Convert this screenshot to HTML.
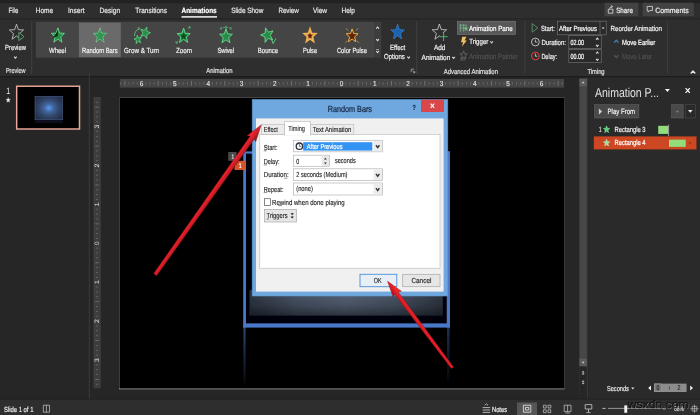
<!DOCTYPE html>
<html><head><meta charset="utf-8"><title>Animations</title>
<style>
html,body{margin:0;padding:0;background:#262626;overflow:hidden}
svg{display:block;font-family:"Liberation Sans",sans-serif}
text{white-space:pre}
</style></head><body>
<svg width="700" height="415" viewBox="0 0 700 415" text-rendering="geometricPrecision">
<filter id="soft" x="0" y="0" width="700" height="415" filterUnits="userSpaceOnUse"><feGaussianBlur stdDeviation="0.38"/></filter>
<g filter="url(#soft)">
<defs>
<radialGradient id="thumbg" cx="50%" cy="50%" r="60%"><stop offset="0" stop-color="#5e9af2"/><stop offset="0.28" stop-color="#4166a2"/><stop offset="0.6" stop-color="#32466a"/><stop offset="1" stop-color="#242f46"/></radialGradient>
<linearGradient id="boxg" x1="0" x2="1" y1="0" y2="0"><stop offset="0" stop-color="#2c3440"/><stop offset="0.25" stop-color="#475264"/><stop offset="0.5" stop-color="#535f72"/><stop offset="0.75" stop-color="#475264"/><stop offset="1" stop-color="#2c3440"/></linearGradient>
<linearGradient id="boxv" x1="0" x2="0" y1="0" y2="1"><stop offset="0" stop-color="#000" stop-opacity="0"/><stop offset="0.5" stop-color="#000" stop-opacity="0.15"/><stop offset="1" stop-color="#000" stop-opacity="0.45"/></linearGradient>
<linearGradient id="refl" x1="0" x2="0" y1="0" y2="1"><stop offset="0" stop-color="#4f7fd0" stop-opacity="0.55"/><stop offset="1" stop-color="#4f7fd0" stop-opacity="0.02"/></linearGradient>
<linearGradient id="refl2" x1="0" x2="0" y1="0" y2="1"><stop offset="0" stop-color="#4f7fd0" stop-opacity="0.38"/><stop offset="1" stop-color="#4f7fd0" stop-opacity="0"/></linearGradient>
<linearGradient id="arrA" x1="0" x2="0" y1="0" y2="1"><stop offset="0.2" stop-color="#ee2830"/><stop offset="0.55" stop-color="#d81c24"/><stop offset="0.8" stop-color="#8a2028"/></linearGradient>
<linearGradient id="arrB" x1="0" x2="0" y1="0" y2="1"><stop offset="0.25" stop-color="#b01820"/><stop offset="0.45" stop-color="#e01c24"/><stop offset="0.75" stop-color="#f02830"/></linearGradient>
</defs>
<rect x="0.00" y="0.00" width="700.00" height="415.00" fill="#262626" />
<rect x="0.00" y="0.00" width="700.00" height="19.00" fill="#2f2f2f" />
<rect x="0.00" y="0.00" width="700.00" height="3.20" fill="#242424" />
<rect x="0.00" y="18.50" width="700.00" height="57.60" fill="#2f2f2f" />
<rect x="0.00" y="18.00" width="700.00" height="1.50" fill="#282828" />
<rect x="0.00" y="76.10" width="700.00" height="1.60" fill="#1f1f1f" />
<text x="8.60" y="12.90" font-size="7.6" fill="#e6e6e6" font-weight="normal" textLength="9.70" lengthAdjust="spacingAndGlyphs" stroke="#e6e6e6" stroke-width="0.2" >File</text>
<text x="35.70" y="12.90" font-size="7.6" fill="#e6e6e6" font-weight="normal" textLength="17.40" lengthAdjust="spacingAndGlyphs" stroke="#e6e6e6" stroke-width="0.2" >Home</text>
<text x="68.00" y="12.90" font-size="7.6" fill="#e6e6e6" font-weight="normal" textLength="16.50" lengthAdjust="spacingAndGlyphs" stroke="#e6e6e6" stroke-width="0.2" >Insert</text>
<text x="99.60" y="12.90" font-size="7.6" fill="#e6e6e6" font-weight="normal" textLength="20.60" lengthAdjust="spacingAndGlyphs" stroke="#e6e6e6" stroke-width="0.2" >Design</text>
<text x="135.30" y="12.90" font-size="7.6" fill="#e6e6e6" font-weight="normal" textLength="31.70" lengthAdjust="spacingAndGlyphs" stroke="#e6e6e6" stroke-width="0.2" >Transitions</text>
<text x="231.20" y="12.90" font-size="7.6" fill="#e6e6e6" font-weight="normal" textLength="32.10" lengthAdjust="spacingAndGlyphs" stroke="#e6e6e6" stroke-width="0.2" >Slide Show</text>
<text x="278.40" y="12.90" font-size="7.6" fill="#e6e6e6" font-weight="normal" textLength="20.40" lengthAdjust="spacingAndGlyphs" stroke="#e6e6e6" stroke-width="0.2" >Review</text>
<text x="313.00" y="12.90" font-size="7.6" fill="#e6e6e6" font-weight="normal" textLength="14.00" lengthAdjust="spacingAndGlyphs" stroke="#e6e6e6" stroke-width="0.2" >View</text>
<text x="341.60" y="12.90" font-size="7.6" fill="#e6e6e6" font-weight="normal" textLength="13.40" lengthAdjust="spacingAndGlyphs" stroke="#e6e6e6" stroke-width="0.2" >Help</text>
<text x="181.50" y="12.90" font-size="7.6" fill="#ffffff" font-weight="bold" textLength="35.20" lengthAdjust="spacingAndGlyphs" stroke="#ffffff" stroke-width="0.2" >Animations</text>
<rect x="181.50" y="16.20" width="35.50" height="1.40" fill="#ffffff" />
<rect x="604.50" y="2.80" width="33.90" height="13.40" fill="#424242" rx="1"/>
<rect x="642.60" y="2.80" width="51.10" height="13.40" fill="#424242" rx="1"/>
<text x="616.20" y="12.60" font-size="7.6" fill="#f0f0f0" font-weight="normal" textLength="16.70" lengthAdjust="spacingAndGlyphs" stroke="#f0f0f0" stroke-width="0.2" >Share</text>
<text x="655.20" y="12.60" font-size="7.6" fill="#f0f0f0" font-weight="normal" textLength="33.50" lengthAdjust="spacingAndGlyphs" stroke="#f0f0f0" stroke-width="0.2" >Comments</text>
<path d="M608.3,9.2 h4.6 v4 h-4.6 z" fill="none" stroke="#e0e0e0" stroke-width="0.8" />
<path d="M609.6,8.6 q0.6,-2 2.6,-2 M611.2,5.4 l1.4,1.2 l-1.4,1.2" fill="none" stroke="#e0e0e0" stroke-width="0.8" />
<path d="M647.2,6.4 h5.2 v4.2 h-2.8 l-1.4,1.5 v-1.5 h-1 z" fill="none" stroke="#e0e0e0" stroke-width="0.8" />
<line x1="31.60" y1="21.00" x2="31.60" y2="74.00" stroke="#424242" stroke-width="0.8" />
<line x1="416.70" y1="21.00" x2="416.70" y2="74.00" stroke="#424242" stroke-width="0.8" />
<line x1="525.00" y1="21.00" x2="525.00" y2="74.00" stroke="#424242" stroke-width="0.8" />
<line x1="667.40" y1="21.00" x2="667.40" y2="74.00" stroke="#424242" stroke-width="0.8" />
<polygon points="16.50,24.20 18.35,29.67 23.60,29.94 19.50,33.58 20.89,39.21 16.50,36.00 12.11,39.21 13.50,33.58 9.40,29.94 14.65,29.67" fill="none" stroke="#cfcfcf" stroke-width="0.8" stroke-linejoin="miter" />
<path d="M18.8,32.6 l5.2,4 l-5.2,4 z" fill="#2f2f2f" stroke="#5aa872" stroke-width="0.9" />
<text x="5.10" y="50.30" font-size="7.4" fill="#f0f0f0" font-weight="normal" textLength="20.80" lengthAdjust="spacingAndGlyphs" stroke="#f0f0f0" stroke-width="0.2" >Preview</text>
<path d="M14.10,56.55 L15.40,58.05 L16.70,56.55" fill="none" stroke="#d0d0d0" stroke-width="1.1199999999999999" />
<text x="5.90" y="73.40" font-size="7.2" fill="#e0e0e0" font-weight="normal" textLength="19.60" lengthAdjust="spacingAndGlyphs" stroke="#e0e0e0" stroke-width="0.2" >Preview</text>
<rect x="35.80" y="21.90" width="338.20" height="35.80" fill="#444444" />
<rect x="374.00" y="21.90" width="7.20" height="35.80" fill="#3c3c3c" />
<rect x="78.90" y="22.60" width="41.90" height="34.60" fill="#6a6a6a" />
<text x="49.00" y="52.60" font-size="7.4" fill="#f2f2f2" font-weight="normal" textLength="17.00" lengthAdjust="spacingAndGlyphs" stroke="#f2f2f2" stroke-width="0.2" >Wheel</text>
<text x="82.00" y="52.60" font-size="7.4" fill="#f2f2f2" font-weight="normal" textLength="35.70" lengthAdjust="spacingAndGlyphs" stroke="#f2f2f2" stroke-width="0.2" >Random Bars</text>
<text x="124.00" y="52.60" font-size="7.4" fill="#f2f2f2" font-weight="normal" textLength="35.10" lengthAdjust="spacingAndGlyphs" stroke="#f2f2f2" stroke-width="0.2" >Grow &amp; Turn</text>
<text x="175.90" y="52.60" font-size="7.4" fill="#f2f2f2" font-weight="normal" textLength="16.20" lengthAdjust="spacingAndGlyphs" stroke="#f2f2f2" stroke-width="0.2" >Zoom</text>
<text x="217.40" y="52.60" font-size="7.4" fill="#f2f2f2" font-weight="normal" textLength="16.70" lengthAdjust="spacingAndGlyphs" stroke="#f2f2f2" stroke-width="0.2" >Swivel</text>
<text x="257.80" y="52.60" font-size="7.4" fill="#f2f2f2" font-weight="normal" textLength="20.40" lengthAdjust="spacingAndGlyphs" stroke="#f2f2f2" stroke-width="0.2" >Bounce</text>
<text x="302.90" y="52.60" font-size="7.4" fill="#f2f2f2" font-weight="normal" textLength="14.20" lengthAdjust="spacingAndGlyphs" stroke="#f2f2f2" stroke-width="0.2" >Pulse</text>
<text x="336.90" y="52.60" font-size="7.4" fill="#f2f2f2" font-weight="normal" textLength="30.10" lengthAdjust="spacingAndGlyphs" stroke="#f2f2f2" stroke-width="0.2" >Color Pulse</text>
<polygon points="57.90,27.90 59.62,33.12 64.51,33.36 60.68,36.83 61.99,42.19 57.90,39.12 53.81,42.19 55.12,36.83 51.29,33.36 56.18,33.12" fill="#268c46" stroke="#63d287" stroke-width="1.0" stroke-linejoin="miter" />
<path d="M57.9,29.4 L57.9,36 L53,38 L55.9,34 Z" fill="#0a3016" stroke="none" stroke-width="1" />
<polygon points="100.00,27.90 101.72,33.12 106.61,33.36 102.78,36.83 104.09,42.19 100.00,39.12 95.91,42.19 97.22,36.83 93.39,33.36 98.28,33.12" fill="#2f9650" stroke="#86dca0" stroke-width="0.9" stroke-linejoin="miter" stroke-dasharray="1.2 0.8"/>
<polygon points="146.76,27.00 146.92,31.29 150.47,32.80 146.92,34.31 146.76,38.60 144.40,35.24 140.76,36.39 142.85,32.80 140.76,29.21 144.40,30.36" fill="#268c46" stroke="#63d287" stroke-width="0.8" stroke-linejoin="miter" />
<polygon points="137.21,35.17 138.63,37.90 141.40,37.49 139.55,39.86 140.75,42.73 138.19,41.46 136.16,43.64 136.43,40.49 133.98,38.97 136.70,38.29" fill="#268c46" stroke="#63d287" stroke-width="0.8" stroke-linejoin="miter" />
<path d="M134.4,36.2 q0.2,-5.6 4.8,-7.6" fill="none" stroke="#63d287" stroke-width="0.8" />
<path d="M137.6,27.4 l2.2,1 l-1.4,1.8" fill="none" stroke="#63d287" stroke-width="0.7" />
<polygon points="183.60,28.10 185.32,33.32 190.21,33.56 186.38,37.03 187.69,42.39 183.60,39.32 179.51,42.39 180.82,37.03 176.99,33.56 181.88,33.32" fill="#268c46" stroke="#63d287" stroke-width="1.0" stroke-linejoin="miter" />
<polygon points="183.60,33.00 184.38,35.19 186.45,35.35 184.86,36.86 185.36,39.15 183.60,37.90 181.84,39.15 182.34,36.86 180.75,35.35 182.82,35.19" fill="#0b4a1e" stroke="#0b4a1e" stroke-width="0.5" stroke-linejoin="miter" />
<path d="M188.2,28.8 l1.8,-1.8 M188.4,26.8 h1.7 v1.7 M178,41.2 l-1.8,1.8 M176,41.2 v1.9 h1.9" fill="none" stroke="#63d287" stroke-width="0.7" />
<polygon points="226.00,28.90 227.67,33.98 232.44,34.22 228.71,37.60 229.98,42.83 226.00,39.83 222.02,42.83 223.29,37.60 219.56,34.22 224.33,33.98" fill="#268c46" stroke="#63d287" stroke-width="1.0" stroke-linejoin="miter" />
<path d="M220.6,28.6 q5.4,-2.6 10.8,0" fill="none" stroke="#63d287" stroke-width="0.7" stroke-dasharray="1.8 1"/>
<path d="M221.6,27 l-1.4,1.6 l1.8,0.8 M230.4,27 l1.4,1.6 l-1.8,0.8" fill="none" stroke="#63d287" stroke-width="0.6" />
<path d="M226,25.6 v3.4" fill="none" stroke="#63d287" stroke-width="0.7" />
<polygon points="265.53,27.80 268.37,32.16 273.02,30.89 270.24,35.31 272.74,39.94 268.18,38.31 265.08,42.44 265.04,37.01 260.63,34.93 265.16,33.21" fill="#268c46" stroke="#63d287" stroke-width="1.0" stroke-linejoin="miter" />
<path d="M271.4,39 l1.7,4.6 l2.9,-5.2" fill="none" stroke="#63d287" stroke-width="0.9" />
<polygon points="310.00,28.60 311.60,33.29 316.03,33.58 312.59,36.76 313.72,41.62 310.00,38.90 306.28,41.62 307.41,36.76 303.97,33.58 308.40,33.29" fill="#8a3d00" stroke="#f2b04c" stroke-width="1.5" stroke-linejoin="miter" />
<polygon points="310.00,31.20 311.03,34.18 313.85,34.38 311.67,36.42 312.38,39.52 310.00,37.80 307.62,39.52 308.33,36.42 306.15,34.38 308.97,34.18" fill="none" stroke="#fde2a8" stroke-width="0.5" stroke-linejoin="miter" />
<rect x="308.70" y="34.60" width="2.60" height="3.00" fill="#6a1800" />
<polygon points="352.10,28.90 353.65,33.57 358.04,33.81 354.61,36.93 355.77,41.74 352.10,39.00 348.43,41.74 349.59,36.93 346.16,33.81 350.55,33.57" fill="#5e2600" stroke="#f2b04c" stroke-width="1.0" stroke-linejoin="miter" />
<path d="M346.2,28.4 l1.8,2 M358,28.4 l-1.8,2 M345.6,42.6 l1.7,-1.8 M358.6,42.6 l-1.7,-1.8" fill="none" stroke="#f2b04c" stroke-width="0.7" />
<path d="M376.20,28.60 L377.60,27.00 L379.00,28.60" fill="none" stroke="#d8d8d8" stroke-width="1.1199999999999999" />
<path d="M376.20,39.10 L377.60,40.70 L379.00,39.10" fill="none" stroke="#d8d8d8" stroke-width="1.1199999999999999" />
<line x1="376.20" y1="49.60" x2="379.00" y2="49.60" stroke="#d8d8d8" stroke-width="0.7" />
<path d="M376.20,51.00 L377.60,52.60 L379.00,51.00" fill="none" stroke="#d8d8d8" stroke-width="1.1199999999999999" />
<polygon points="397.60,24.40 399.36,29.65 404.30,29.93 400.45,33.45 401.74,38.87 397.60,35.80 393.46,38.87 394.75,33.45 390.90,29.93 395.84,29.65" fill="#1a62ac" stroke="#3b8ee0" stroke-width="0.9" stroke-linejoin="miter" stroke-dasharray="1.3 0.7"/>
<text x="389.90" y="50.30" font-size="7.4" fill="#f0f0f0" font-weight="normal" textLength="15.30" lengthAdjust="spacingAndGlyphs" stroke="#f0f0f0" stroke-width="0.2" >Effect</text>
<text x="384.00" y="59.20" font-size="7.4" fill="#f0f0f0" font-weight="normal" textLength="20.80" lengthAdjust="spacingAndGlyphs" stroke="#f0f0f0" stroke-width="0.2" >Options</text>
<path d="M407.30,56.65 L408.60,58.15 L409.90,56.65" fill="none" stroke="#d0d0d0" stroke-width="1.1199999999999999" />
<path d="M411.2,69.2 h3 M411.2,69.2 v3 M412.6,70.6 l2.2,2.2 M414.8,71 v1.8 h-1.8" fill="none" stroke="#c8c8c8" stroke-width="0.6" />
<text x="206.30" y="73.40" font-size="7.2" fill="#e0e0e0" font-weight="normal" textLength="26.20" lengthAdjust="spacingAndGlyphs" stroke="#e0e0e0" stroke-width="0.2" >Animation</text>
<polygon points="439.40,24.00 441.25,29.57 446.59,29.80 442.40,33.48 443.84,39.20 439.40,35.90 434.96,39.20 436.40,33.48 432.21,29.80 437.55,29.57" fill="none" stroke="#d2d2d2" stroke-width="0.8" stroke-linejoin="miter" />
<rect x="440.00" y="33.00" width="8.40" height="8.40" fill="#2f2f2f" />
<path d="M443.6,32.4 v8.6 M439.6,36.7 h8" fill="none" stroke="#4cb070" stroke-width="1" />
<text x="433.90" y="49.70" font-size="7.4" fill="#f0f0f0" font-weight="normal" textLength="11.50" lengthAdjust="spacingAndGlyphs" stroke="#f0f0f0" stroke-width="0.2" >Add</text>
<text x="421.60" y="59.50" font-size="7.4" fill="#f0f0f0" font-weight="normal" textLength="28.70" lengthAdjust="spacingAndGlyphs" stroke="#f0f0f0" stroke-width="0.2" >Animation</text>
<path d="M452.30,56.85 L453.60,58.35 L454.90,56.85" fill="none" stroke="#d0d0d0" stroke-width="1.1199999999999999" />
<rect x="457.40" y="21.30" width="58.10" height="13.10" fill="#585858" stroke="#7a7a7a" stroke-width="0.6"/>
<path d="M460.6,24.2 v7.4 M463.6,24.2 v7.4 M459.2,25.2 h8 M459.2,28 h8" fill="none" stroke="#74b48a" stroke-width="0.8" />
<polygon points="466.00,26.00 466.57,27.71 468.18,27.80 466.92,28.94 467.34,30.70 466.00,29.70 464.66,30.70 465.08,28.94 463.82,27.80 465.43,27.71" fill="#6ab884" stroke="#6ab884" stroke-width="0.3" stroke-linejoin="miter" />
<text x="468.90" y="30.80" font-size="7.4" fill="#ffffff" font-weight="normal" textLength="43.80" lengthAdjust="spacingAndGlyphs" stroke="#ffffff" stroke-width="0.2" >Animation Pane</text>
<path d="M462.2,36.8 h4.2 l-1.8,3.6 h2.2 l-5,6.4 l1.3,-4.6 h-2 z" fill="#f2c060" stroke="none" stroke-width="1" />
<text x="469.20" y="44.30" font-size="7.4" fill="#f0f0f0" font-weight="normal" textLength="19.20" lengthAdjust="spacingAndGlyphs" stroke="#f0f0f0" stroke-width="0.2" >Trigger</text>
<path d="M490.30,41.45 L491.60,42.95 L492.90,41.45" fill="none" stroke="#d0d0d0" stroke-width="1.1199999999999999" />
<polygon points="463.60,50.80 464.58,53.66 467.28,53.84 465.19,55.79 465.88,58.76 463.60,57.10 461.32,58.76 462.01,55.79 459.92,53.84 462.62,53.66" fill="none" stroke="#6a6a6a" stroke-width="0.8" stroke-linejoin="miter" />
<path d="M460.8,58.6 h4 v1.6 h-4 z" fill="none" stroke="#6a6a6a" stroke-width="0.6" />
<text x="468.90" y="59.00" font-size="7.4" fill="#555555" font-weight="normal" textLength="48.80" lengthAdjust="spacingAndGlyphs" stroke="#555555" stroke-width="0.1" >Animation Painter</text>
<text x="443.70" y="73.50" font-size="7.2" fill="#e0e0e0" font-weight="normal" textLength="54.30" lengthAdjust="spacingAndGlyphs" stroke="#e0e0e0" stroke-width="0.2" >Advanced Animation</text>
<path d="M532.2,23.6 l5.6,4.3 l-5.6,4.3 z" fill="none" stroke="#5aa272" stroke-width="0.8" />
<text x="541.00" y="30.80" font-size="7.4" fill="#f0f0f0" font-weight="normal" textLength="13.80" lengthAdjust="spacingAndGlyphs" stroke="#f0f0f0" stroke-width="0.2" >Start:</text>
<rect x="557.50" y="21.20" width="48.70" height="13.60" fill="#2a2a2a" stroke="#6e6e6e" stroke-width="0.7"/>
<line x1="600.00" y1="21.20" x2="600.00" y2="34.80" stroke="#6e6e6e" stroke-width="0.7" />
<text x="559.10" y="30.80" font-size="7.4" fill="#ffffff" font-weight="normal" textLength="37.80" lengthAdjust="spacingAndGlyphs" stroke="#ffffff" stroke-width="0.2" >After Previous</text>
<polygon points="601.70,27.60 604.50,27.60 603.10,29.20" fill="#e0e0e0"/>
<circle cx="535.4" cy="42" r="3.9" fill="none" stroke="#e0e0e0" stroke-width="0.8"/>
<path d="M535.4,39.6 v2.6 h2" fill="none" stroke="#e0e0e0" stroke-width="0.7" />
<text x="541.40" y="44.70" font-size="7.4" fill="#f0f0f0" font-weight="normal" textLength="24.60" lengthAdjust="spacingAndGlyphs" stroke="#f0f0f0" stroke-width="0.2" >Duration:</text>
<rect x="568.80" y="35.60" width="32.50" height="12.80" fill="#2a2a2a" stroke="#6e6e6e" stroke-width="0.7"/>
<text x="570.40" y="44.70" font-size="7.4" fill="#ffffff" font-weight="normal" textLength="13.60" lengthAdjust="spacingAndGlyphs" stroke="#ffffff" stroke-width="0.2" >02.00</text>
<path d="M596.10,39.60 L597.30,38.20 L598.50,39.60" fill="none" stroke="#e0e0e0" stroke-width="1.1199999999999999" />
<path d="M596.10,44.90 L597.30,46.30 L598.50,44.90" fill="none" stroke="#e0e0e0" stroke-width="1.1199999999999999" />
<circle cx="535.4" cy="56" r="3.9" fill="none" stroke="#e04040" stroke-width="1"/>
<path d="M535.4,53.6 v2.6 h2" fill="none" stroke="#f0f0f0" stroke-width="0.7" />
<text x="541.40" y="59.00" font-size="7.4" fill="#f0f0f0" font-weight="normal" textLength="15.60" lengthAdjust="spacingAndGlyphs" stroke="#f0f0f0" stroke-width="0.2" >Delay:</text>
<rect x="568.80" y="49.40" width="32.50" height="13.20" fill="#2a2a2a" stroke="#6e6e6e" stroke-width="0.7"/>
<text x="570.40" y="59.00" font-size="7.4" fill="#ffffff" font-weight="normal" textLength="13.60" lengthAdjust="spacingAndGlyphs" stroke="#ffffff" stroke-width="0.2" >00.00</text>
<path d="M596.10,53.50 L597.30,52.10 L598.50,53.50" fill="none" stroke="#e0e0e0" stroke-width="1.1199999999999999" />
<path d="M596.10,58.90 L597.30,60.30 L598.50,58.90" fill="none" stroke="#e0e0e0" stroke-width="1.1199999999999999" />
<text x="587.40" y="73.50" font-size="7.2" fill="#e0e0e0" font-weight="normal" textLength="17.20" lengthAdjust="spacingAndGlyphs" stroke="#e0e0e0" stroke-width="0.2" >Timing</text>
<text x="610.50" y="30.70" font-size="7.4" fill="#f0f0f0" font-weight="normal" textLength="51.50" lengthAdjust="spacingAndGlyphs" stroke="#f0f0f0" stroke-width="0.2" >Reorder Animation</text>
<path d="M614.10,42.60 L616.30,40.20 L618.50,42.60" fill="none" stroke="#4480b0" stroke-width="1.26" />
<text x="622.00" y="44.90" font-size="7.4" fill="#ffffff" font-weight="normal" textLength="33.20" lengthAdjust="spacingAndGlyphs" stroke="#ffffff" stroke-width="0.2" >Move Earlier</text>
<path d="M614.10,55.20 L616.30,57.60 L618.50,55.20" fill="none" stroke="#555555" stroke-width="1.26" />
<text x="622.00" y="59.20" font-size="7.4" fill="#525252" font-weight="normal" textLength="30.00" lengthAdjust="spacingAndGlyphs" stroke="#525252" stroke-width="0.1" >Move Later</text>
<path d="M690.70,73.50 L693.00,71.10 L695.30,73.50" fill="none" stroke="#e0e0e0" stroke-width="1.4" />
<line x1="89.30" y1="73.00" x2="89.30" y2="399.00" stroke="#3e3e3e" stroke-width="0.9" />
<text x="6.30" y="93.80" font-size="9" fill="#f0f0f0" font-weight="normal" textLength="3.90" lengthAdjust="spacingAndGlyphs" stroke="#f0f0f0" stroke-width="0" >1</text>
<polygon points="8.20,97.60 8.77,99.31 10.38,99.40 9.12,100.54 9.54,102.30 8.20,101.30 6.86,102.30 7.28,100.54 6.02,99.40 7.63,99.31" fill="#f0f0f0" stroke="#f0f0f0" stroke-width="0.3" stroke-linejoin="miter" />
<rect x="16.30" y="85.50" width="63.40" height="43.90" fill="#000000" />
<rect x="16.70" y="86.20" width="62.80" height="42.80" fill="none" stroke="#eaa696" stroke-width="1.5"/>
<rect x="35.00" y="96.20" width="27.80" height="23.60" fill="url(#thumbg)" stroke="#4a6896" stroke-width="0.5"/>
<rect x="35.00" y="120.20" width="27.80" height="2.80" fill="#0a1020" />
<rect x="119.80" y="79.00" width="444.20" height="8.60" fill="#454545" />
<text x="139.72" y="85.80" font-size="7.2" fill="#e0e0e0" font-weight="normal" textLength="3.60" lengthAdjust="spacingAndGlyphs" stroke="#e0e0e0" stroke-width="0.15" >6</text>
<text x="173.05" y="85.80" font-size="7.2" fill="#e0e0e0" font-weight="normal" textLength="3.60" lengthAdjust="spacingAndGlyphs" stroke="#e0e0e0" stroke-width="0.15" >5</text>
<text x="206.38" y="85.80" font-size="7.2" fill="#e0e0e0" font-weight="normal" textLength="3.60" lengthAdjust="spacingAndGlyphs" stroke="#e0e0e0" stroke-width="0.15" >4</text>
<text x="239.71" y="85.80" font-size="7.2" fill="#e0e0e0" font-weight="normal" textLength="3.60" lengthAdjust="spacingAndGlyphs" stroke="#e0e0e0" stroke-width="0.15" >3</text>
<text x="273.04" y="85.80" font-size="7.2" fill="#e0e0e0" font-weight="normal" textLength="3.60" lengthAdjust="spacingAndGlyphs" stroke="#e0e0e0" stroke-width="0.15" >2</text>
<text x="306.37" y="85.80" font-size="7.2" fill="#e0e0e0" font-weight="normal" textLength="3.60" lengthAdjust="spacingAndGlyphs" stroke="#e0e0e0" stroke-width="0.15" >1</text>
<text x="339.70" y="85.80" font-size="7.2" fill="#e0e0e0" font-weight="normal" textLength="3.60" lengthAdjust="spacingAndGlyphs" stroke="#e0e0e0" stroke-width="0.15" >0</text>
<text x="373.03" y="85.80" font-size="7.2" fill="#e0e0e0" font-weight="normal" textLength="3.60" lengthAdjust="spacingAndGlyphs" stroke="#e0e0e0" stroke-width="0.15" >1</text>
<text x="406.36" y="85.80" font-size="7.2" fill="#e0e0e0" font-weight="normal" textLength="3.60" lengthAdjust="spacingAndGlyphs" stroke="#e0e0e0" stroke-width="0.15" >2</text>
<text x="439.69" y="85.80" font-size="7.2" fill="#e0e0e0" font-weight="normal" textLength="3.60" lengthAdjust="spacingAndGlyphs" stroke="#e0e0e0" stroke-width="0.15" >3</text>
<text x="473.02" y="85.80" font-size="7.2" fill="#e0e0e0" font-weight="normal" textLength="3.60" lengthAdjust="spacingAndGlyphs" stroke="#e0e0e0" stroke-width="0.15" >4</text>
<text x="506.35" y="85.80" font-size="7.2" fill="#e0e0e0" font-weight="normal" textLength="3.60" lengthAdjust="spacingAndGlyphs" stroke="#e0e0e0" stroke-width="0.15" >5</text>
<text x="539.68" y="85.80" font-size="7.2" fill="#e0e0e0" font-weight="normal" textLength="3.60" lengthAdjust="spacingAndGlyphs" stroke="#e0e0e0" stroke-width="0.15" >6</text>
<line x1="120.69" y1="82.20" x2="120.69" y2="84.60" stroke="#808080" stroke-width="0.6" />
<line x1="124.86" y1="81.00" x2="124.86" y2="85.60" stroke="#909090" stroke-width="0.6" />
<line x1="129.02" y1="82.20" x2="129.02" y2="84.60" stroke="#808080" stroke-width="0.6" />
<line x1="133.19" y1="82.20" x2="133.19" y2="84.60" stroke="#808080" stroke-width="0.6" />
<line x1="137.35" y1="82.20" x2="137.35" y2="84.60" stroke="#808080" stroke-width="0.6" />
<line x1="145.69" y1="82.20" x2="145.69" y2="84.60" stroke="#808080" stroke-width="0.6" />
<line x1="149.85" y1="82.20" x2="149.85" y2="84.60" stroke="#808080" stroke-width="0.6" />
<line x1="154.02" y1="82.20" x2="154.02" y2="84.60" stroke="#808080" stroke-width="0.6" />
<line x1="158.19" y1="81.00" x2="158.19" y2="85.60" stroke="#909090" stroke-width="0.6" />
<line x1="162.35" y1="82.20" x2="162.35" y2="84.60" stroke="#808080" stroke-width="0.6" />
<line x1="166.52" y1="82.20" x2="166.52" y2="84.60" stroke="#808080" stroke-width="0.6" />
<line x1="170.68" y1="82.20" x2="170.68" y2="84.60" stroke="#808080" stroke-width="0.6" />
<line x1="179.02" y1="82.20" x2="179.02" y2="84.60" stroke="#808080" stroke-width="0.6" />
<line x1="183.18" y1="82.20" x2="183.18" y2="84.60" stroke="#808080" stroke-width="0.6" />
<line x1="187.35" y1="82.20" x2="187.35" y2="84.60" stroke="#808080" stroke-width="0.6" />
<line x1="191.52" y1="81.00" x2="191.52" y2="85.60" stroke="#909090" stroke-width="0.6" />
<line x1="195.68" y1="82.20" x2="195.68" y2="84.60" stroke="#808080" stroke-width="0.6" />
<line x1="199.85" y1="82.20" x2="199.85" y2="84.60" stroke="#808080" stroke-width="0.6" />
<line x1="204.01" y1="82.20" x2="204.01" y2="84.60" stroke="#808080" stroke-width="0.6" />
<line x1="212.35" y1="82.20" x2="212.35" y2="84.60" stroke="#808080" stroke-width="0.6" />
<line x1="216.51" y1="82.20" x2="216.51" y2="84.60" stroke="#808080" stroke-width="0.6" />
<line x1="220.68" y1="82.20" x2="220.68" y2="84.60" stroke="#808080" stroke-width="0.6" />
<line x1="224.84" y1="81.00" x2="224.84" y2="85.60" stroke="#909090" stroke-width="0.6" />
<line x1="229.01" y1="82.20" x2="229.01" y2="84.60" stroke="#808080" stroke-width="0.6" />
<line x1="233.18" y1="82.20" x2="233.18" y2="84.60" stroke="#808080" stroke-width="0.6" />
<line x1="237.34" y1="82.20" x2="237.34" y2="84.60" stroke="#808080" stroke-width="0.6" />
<line x1="245.68" y1="82.20" x2="245.68" y2="84.60" stroke="#808080" stroke-width="0.6" />
<line x1="249.84" y1="82.20" x2="249.84" y2="84.60" stroke="#808080" stroke-width="0.6" />
<line x1="254.01" y1="82.20" x2="254.01" y2="84.60" stroke="#808080" stroke-width="0.6" />
<line x1="258.18" y1="81.00" x2="258.18" y2="85.60" stroke="#909090" stroke-width="0.6" />
<line x1="262.34" y1="82.20" x2="262.34" y2="84.60" stroke="#808080" stroke-width="0.6" />
<line x1="266.51" y1="82.20" x2="266.51" y2="84.60" stroke="#808080" stroke-width="0.6" />
<line x1="270.67" y1="82.20" x2="270.67" y2="84.60" stroke="#808080" stroke-width="0.6" />
<line x1="279.01" y1="82.20" x2="279.01" y2="84.60" stroke="#808080" stroke-width="0.6" />
<line x1="283.17" y1="82.20" x2="283.17" y2="84.60" stroke="#808080" stroke-width="0.6" />
<line x1="287.34" y1="82.20" x2="287.34" y2="84.60" stroke="#808080" stroke-width="0.6" />
<line x1="291.50" y1="81.00" x2="291.50" y2="85.60" stroke="#909090" stroke-width="0.6" />
<line x1="295.67" y1="82.20" x2="295.67" y2="84.60" stroke="#808080" stroke-width="0.6" />
<line x1="299.84" y1="82.20" x2="299.84" y2="84.60" stroke="#808080" stroke-width="0.6" />
<line x1="304.00" y1="82.20" x2="304.00" y2="84.60" stroke="#808080" stroke-width="0.6" />
<line x1="312.34" y1="82.20" x2="312.34" y2="84.60" stroke="#808080" stroke-width="0.6" />
<line x1="316.50" y1="82.20" x2="316.50" y2="84.60" stroke="#808080" stroke-width="0.6" />
<line x1="320.67" y1="82.20" x2="320.67" y2="84.60" stroke="#808080" stroke-width="0.6" />
<line x1="324.83" y1="81.00" x2="324.83" y2="85.60" stroke="#909090" stroke-width="0.6" />
<line x1="329.00" y1="82.20" x2="329.00" y2="84.60" stroke="#808080" stroke-width="0.6" />
<line x1="333.17" y1="82.20" x2="333.17" y2="84.60" stroke="#808080" stroke-width="0.6" />
<line x1="337.33" y1="82.20" x2="337.33" y2="84.60" stroke="#808080" stroke-width="0.6" />
<line x1="345.67" y1="82.20" x2="345.67" y2="84.60" stroke="#808080" stroke-width="0.6" />
<line x1="349.83" y1="82.20" x2="349.83" y2="84.60" stroke="#808080" stroke-width="0.6" />
<line x1="354.00" y1="82.20" x2="354.00" y2="84.60" stroke="#808080" stroke-width="0.6" />
<line x1="358.17" y1="81.00" x2="358.17" y2="85.60" stroke="#909090" stroke-width="0.6" />
<line x1="362.33" y1="82.20" x2="362.33" y2="84.60" stroke="#808080" stroke-width="0.6" />
<line x1="366.50" y1="82.20" x2="366.50" y2="84.60" stroke="#808080" stroke-width="0.6" />
<line x1="370.66" y1="82.20" x2="370.66" y2="84.60" stroke="#808080" stroke-width="0.6" />
<line x1="379.00" y1="82.20" x2="379.00" y2="84.60" stroke="#808080" stroke-width="0.6" />
<line x1="383.16" y1="82.20" x2="383.16" y2="84.60" stroke="#808080" stroke-width="0.6" />
<line x1="387.33" y1="82.20" x2="387.33" y2="84.60" stroke="#808080" stroke-width="0.6" />
<line x1="391.50" y1="81.00" x2="391.50" y2="85.60" stroke="#909090" stroke-width="0.6" />
<line x1="395.66" y1="82.20" x2="395.66" y2="84.60" stroke="#808080" stroke-width="0.6" />
<line x1="399.83" y1="82.20" x2="399.83" y2="84.60" stroke="#808080" stroke-width="0.6" />
<line x1="403.99" y1="82.20" x2="403.99" y2="84.60" stroke="#808080" stroke-width="0.6" />
<line x1="412.33" y1="82.20" x2="412.33" y2="84.60" stroke="#808080" stroke-width="0.6" />
<line x1="416.49" y1="82.20" x2="416.49" y2="84.60" stroke="#808080" stroke-width="0.6" />
<line x1="420.66" y1="82.20" x2="420.66" y2="84.60" stroke="#808080" stroke-width="0.6" />
<line x1="424.82" y1="81.00" x2="424.82" y2="85.60" stroke="#909090" stroke-width="0.6" />
<line x1="428.99" y1="82.20" x2="428.99" y2="84.60" stroke="#808080" stroke-width="0.6" />
<line x1="433.16" y1="82.20" x2="433.16" y2="84.60" stroke="#808080" stroke-width="0.6" />
<line x1="437.32" y1="82.20" x2="437.32" y2="84.60" stroke="#808080" stroke-width="0.6" />
<line x1="445.66" y1="82.20" x2="445.66" y2="84.60" stroke="#808080" stroke-width="0.6" />
<line x1="449.82" y1="82.20" x2="449.82" y2="84.60" stroke="#808080" stroke-width="0.6" />
<line x1="453.99" y1="82.20" x2="453.99" y2="84.60" stroke="#808080" stroke-width="0.6" />
<line x1="458.15" y1="81.00" x2="458.15" y2="85.60" stroke="#909090" stroke-width="0.6" />
<line x1="462.32" y1="82.20" x2="462.32" y2="84.60" stroke="#808080" stroke-width="0.6" />
<line x1="466.49" y1="82.20" x2="466.49" y2="84.60" stroke="#808080" stroke-width="0.6" />
<line x1="470.65" y1="82.20" x2="470.65" y2="84.60" stroke="#808080" stroke-width="0.6" />
<line x1="478.99" y1="82.20" x2="478.99" y2="84.60" stroke="#808080" stroke-width="0.6" />
<line x1="483.15" y1="82.20" x2="483.15" y2="84.60" stroke="#808080" stroke-width="0.6" />
<line x1="487.32" y1="82.20" x2="487.32" y2="84.60" stroke="#808080" stroke-width="0.6" />
<line x1="491.49" y1="81.00" x2="491.49" y2="85.60" stroke="#909090" stroke-width="0.6" />
<line x1="495.65" y1="82.20" x2="495.65" y2="84.60" stroke="#808080" stroke-width="0.6" />
<line x1="499.82" y1="82.20" x2="499.82" y2="84.60" stroke="#808080" stroke-width="0.6" />
<line x1="503.98" y1="82.20" x2="503.98" y2="84.60" stroke="#808080" stroke-width="0.6" />
<line x1="512.32" y1="82.20" x2="512.32" y2="84.60" stroke="#808080" stroke-width="0.6" />
<line x1="516.48" y1="82.20" x2="516.48" y2="84.60" stroke="#808080" stroke-width="0.6" />
<line x1="520.65" y1="82.20" x2="520.65" y2="84.60" stroke="#808080" stroke-width="0.6" />
<line x1="524.82" y1="81.00" x2="524.82" y2="85.60" stroke="#909090" stroke-width="0.6" />
<line x1="528.98" y1="82.20" x2="528.98" y2="84.60" stroke="#808080" stroke-width="0.6" />
<line x1="533.15" y1="82.20" x2="533.15" y2="84.60" stroke="#808080" stroke-width="0.6" />
<line x1="537.31" y1="82.20" x2="537.31" y2="84.60" stroke="#808080" stroke-width="0.6" />
<line x1="545.65" y1="82.20" x2="545.65" y2="84.60" stroke="#808080" stroke-width="0.6" />
<line x1="549.81" y1="82.20" x2="549.81" y2="84.60" stroke="#808080" stroke-width="0.6" />
<line x1="553.98" y1="82.20" x2="553.98" y2="84.60" stroke="#808080" stroke-width="0.6" />
<line x1="558.14" y1="81.00" x2="558.14" y2="85.60" stroke="#909090" stroke-width="0.6" />
<line x1="562.31" y1="82.20" x2="562.31" y2="84.60" stroke="#808080" stroke-width="0.6" />
<rect x="93.40" y="97.00" width="7.40" height="291.40" fill="#3c3c3c" />
<text transform="translate(99.4,128.50) rotate(-90)" font-size="6.4" fill="#e8e8e8" textLength="3.8" lengthAdjust="spacingAndGlyphs">3</text>
<text transform="translate(99.4,167.40) rotate(-90)" font-size="6.4" fill="#e8e8e8" textLength="3.8" lengthAdjust="spacingAndGlyphs">2</text>
<text transform="translate(99.4,206.30) rotate(-90)" font-size="6.4" fill="#e8e8e8" textLength="3.8" lengthAdjust="spacingAndGlyphs">1</text>
<text transform="translate(99.4,245.20) rotate(-90)" font-size="6.4" fill="#e8e8e8" textLength="3.8" lengthAdjust="spacingAndGlyphs">0</text>
<text transform="translate(99.4,284.10) rotate(-90)" font-size="6.4" fill="#e8e8e8" textLength="3.8" lengthAdjust="spacingAndGlyphs">1</text>
<text transform="translate(99.4,323.00) rotate(-90)" font-size="6.4" fill="#e8e8e8" textLength="3.8" lengthAdjust="spacingAndGlyphs">2</text>
<text transform="translate(99.4,361.90) rotate(-90)" font-size="6.4" fill="#e8e8e8" textLength="3.8" lengthAdjust="spacingAndGlyphs">3</text>
<line x1="96.00" y1="102.29" x2="98.00" y2="102.29" stroke="#7c7c7c" stroke-width="0.6" />
<line x1="95.20" y1="107.15" x2="98.80" y2="107.15" stroke="#8c8c8c" stroke-width="0.6" />
<line x1="96.00" y1="112.01" x2="98.00" y2="112.01" stroke="#7c7c7c" stroke-width="0.6" />
<line x1="96.00" y1="116.88" x2="98.00" y2="116.88" stroke="#7c7c7c" stroke-width="0.6" />
<line x1="96.00" y1="121.74" x2="98.00" y2="121.74" stroke="#7c7c7c" stroke-width="0.6" />
<line x1="96.00" y1="131.46" x2="98.00" y2="131.46" stroke="#7c7c7c" stroke-width="0.6" />
<line x1="96.00" y1="136.33" x2="98.00" y2="136.33" stroke="#7c7c7c" stroke-width="0.6" />
<line x1="96.00" y1="141.19" x2="98.00" y2="141.19" stroke="#7c7c7c" stroke-width="0.6" />
<line x1="95.20" y1="146.05" x2="98.80" y2="146.05" stroke="#8c8c8c" stroke-width="0.6" />
<line x1="96.00" y1="150.91" x2="98.00" y2="150.91" stroke="#7c7c7c" stroke-width="0.6" />
<line x1="96.00" y1="155.78" x2="98.00" y2="155.78" stroke="#7c7c7c" stroke-width="0.6" />
<line x1="96.00" y1="160.64" x2="98.00" y2="160.64" stroke="#7c7c7c" stroke-width="0.6" />
<line x1="96.00" y1="170.36" x2="98.00" y2="170.36" stroke="#7c7c7c" stroke-width="0.6" />
<line x1="96.00" y1="175.23" x2="98.00" y2="175.23" stroke="#7c7c7c" stroke-width="0.6" />
<line x1="96.00" y1="180.09" x2="98.00" y2="180.09" stroke="#7c7c7c" stroke-width="0.6" />
<line x1="95.20" y1="184.95" x2="98.80" y2="184.95" stroke="#8c8c8c" stroke-width="0.6" />
<line x1="96.00" y1="189.81" x2="98.00" y2="189.81" stroke="#7c7c7c" stroke-width="0.6" />
<line x1="96.00" y1="194.68" x2="98.00" y2="194.68" stroke="#7c7c7c" stroke-width="0.6" />
<line x1="96.00" y1="199.54" x2="98.00" y2="199.54" stroke="#7c7c7c" stroke-width="0.6" />
<line x1="96.00" y1="209.26" x2="98.00" y2="209.26" stroke="#7c7c7c" stroke-width="0.6" />
<line x1="96.00" y1="214.12" x2="98.00" y2="214.12" stroke="#7c7c7c" stroke-width="0.6" />
<line x1="96.00" y1="218.99" x2="98.00" y2="218.99" stroke="#7c7c7c" stroke-width="0.6" />
<line x1="95.20" y1="223.85" x2="98.80" y2="223.85" stroke="#8c8c8c" stroke-width="0.6" />
<line x1="96.00" y1="228.71" x2="98.00" y2="228.71" stroke="#7c7c7c" stroke-width="0.6" />
<line x1="96.00" y1="233.58" x2="98.00" y2="233.58" stroke="#7c7c7c" stroke-width="0.6" />
<line x1="96.00" y1="238.44" x2="98.00" y2="238.44" stroke="#7c7c7c" stroke-width="0.6" />
<line x1="96.00" y1="248.16" x2="98.00" y2="248.16" stroke="#7c7c7c" stroke-width="0.6" />
<line x1="96.00" y1="253.03" x2="98.00" y2="253.03" stroke="#7c7c7c" stroke-width="0.6" />
<line x1="96.00" y1="257.89" x2="98.00" y2="257.89" stroke="#7c7c7c" stroke-width="0.6" />
<line x1="95.20" y1="262.75" x2="98.80" y2="262.75" stroke="#8c8c8c" stroke-width="0.6" />
<line x1="96.00" y1="267.61" x2="98.00" y2="267.61" stroke="#7c7c7c" stroke-width="0.6" />
<line x1="96.00" y1="272.48" x2="98.00" y2="272.48" stroke="#7c7c7c" stroke-width="0.6" />
<line x1="96.00" y1="277.34" x2="98.00" y2="277.34" stroke="#7c7c7c" stroke-width="0.6" />
<line x1="96.00" y1="287.06" x2="98.00" y2="287.06" stroke="#7c7c7c" stroke-width="0.6" />
<line x1="96.00" y1="291.93" x2="98.00" y2="291.93" stroke="#7c7c7c" stroke-width="0.6" />
<line x1="96.00" y1="296.79" x2="98.00" y2="296.79" stroke="#7c7c7c" stroke-width="0.6" />
<line x1="95.20" y1="301.65" x2="98.80" y2="301.65" stroke="#8c8c8c" stroke-width="0.6" />
<line x1="96.00" y1="306.51" x2="98.00" y2="306.51" stroke="#7c7c7c" stroke-width="0.6" />
<line x1="96.00" y1="311.38" x2="98.00" y2="311.38" stroke="#7c7c7c" stroke-width="0.6" />
<line x1="96.00" y1="316.24" x2="98.00" y2="316.24" stroke="#7c7c7c" stroke-width="0.6" />
<line x1="96.00" y1="325.96" x2="98.00" y2="325.96" stroke="#7c7c7c" stroke-width="0.6" />
<line x1="96.00" y1="330.82" x2="98.00" y2="330.82" stroke="#7c7c7c" stroke-width="0.6" />
<line x1="96.00" y1="335.69" x2="98.00" y2="335.69" stroke="#7c7c7c" stroke-width="0.6" />
<line x1="95.20" y1="340.55" x2="98.80" y2="340.55" stroke="#8c8c8c" stroke-width="0.6" />
<line x1="96.00" y1="345.41" x2="98.00" y2="345.41" stroke="#7c7c7c" stroke-width="0.6" />
<line x1="96.00" y1="350.27" x2="98.00" y2="350.27" stroke="#7c7c7c" stroke-width="0.6" />
<line x1="96.00" y1="355.14" x2="98.00" y2="355.14" stroke="#7c7c7c" stroke-width="0.6" />
<line x1="96.00" y1="364.86" x2="98.00" y2="364.86" stroke="#7c7c7c" stroke-width="0.6" />
<line x1="96.00" y1="369.73" x2="98.00" y2="369.73" stroke="#7c7c7c" stroke-width="0.6" />
<line x1="96.00" y1="374.59" x2="98.00" y2="374.59" stroke="#7c7c7c" stroke-width="0.6" />
<line x1="95.20" y1="379.45" x2="98.80" y2="379.45" stroke="#8c8c8c" stroke-width="0.6" />
<line x1="96.00" y1="384.31" x2="98.00" y2="384.31" stroke="#7c7c7c" stroke-width="0.6" />
<rect x="119.00" y="97.00" width="445.60" height="292.00" fill="#424242" />
<rect x="119.00" y="388.20" width="445.40" height="1.10" fill="#9a9a9a" />
<rect x="119.90" y="98.00" width="444.10" height="290.40" fill="#000000" />
<rect x="243.20" y="151.40" width="206.80" height="175.60" fill="#04050c" stroke="#4f7fd0" stroke-width="0"/>
<rect x="246.00" y="153.60" width="201.00" height="170.00" fill="#05060f" />
<rect x="243.20" y="151.40" width="2.80" height="176.00" fill="#4a78c8" />
<rect x="446.80" y="151.40" width="3.20" height="176.00" fill="#4a78c8" />
<rect x="243.20" y="151.40" width="206.80" height="2.20" fill="#4a78c8" />
<rect x="243.20" y="323.40" width="206.80" height="4.20" fill="#4a78c8" />
<rect x="249.60" y="290.00" width="193.20" height="25.40" fill="url(#boxg)" />
<rect x="249.60" y="296.00" width="193.20" height="19.40" fill="url(#boxv)" />
<rect x="243.40" y="327.60" width="2.20" height="60.40" fill="url(#refl)" />
<rect x="447.00" y="327.60" width="2.60" height="60.40" fill="url(#refl2)" />
<rect x="228.20" y="152.00" width="8.40" height="8.80" fill="#4a4a4a" />
<text x="231.40" y="158.80" font-size="6.6" fill="#e0e0e0" font-weight="normal" textLength="2.60" lengthAdjust="spacingAndGlyphs" stroke="#e0e0e0" stroke-width="0.2" >1</text>
<rect x="234.50" y="160.80" width="11.10" height="9.20" fill="#d2572a" />
<text x="238.80" y="168.00" font-size="6.8" fill="#ffffff" font-weight="normal" textLength="2.80" lengthAdjust="spacingAndGlyphs" stroke="#ffffff" stroke-width="0.2" >1</text>
<rect x="252.20" y="99.40" width="195.60" height="196.60" fill="#6ea8de" />
<rect x="252.20" y="99.40" width="195.60" height="196.60" fill="none" stroke="#5a93cc" stroke-width="0.6"/>
<text x="327.70" y="112.00" font-size="8.8" fill="#15233f" font-weight="normal" textLength="44.30" lengthAdjust="spacingAndGlyphs" stroke="#15233f" stroke-width="0.2" >Random Bars</text>
<text x="412.60" y="110.40" font-size="7.4" fill="#1c2c50" font-weight="bold" textLength="3.40" lengthAdjust="spacingAndGlyphs" stroke="#1c2c50" stroke-width="0.2" >?</text>
<rect x="421.00" y="99.60" width="23.00" height="12.40" fill="#d9464c" />
<path d="M430.6,103.6 l3.6,4.2 M434.2,103.6 l-3.6,4.2" fill="none" stroke="#ffffff" stroke-width="1.1" />
<rect x="256.00" y="118.40" width="187.60" height="173.20" fill="#f0f0f0" />
<rect x="259.80" y="134.40" width="180.20" height="133.80" fill="#ffffff" stroke="#b8b8b8" stroke-width="0.6"/>
<rect x="261.60" y="124.40" width="23.10" height="10.00" fill="#ececec" stroke="#b8b8b8" stroke-width="0.6"/>
<rect x="310.40" y="124.40" width="43.40" height="10.00" fill="#ececec" stroke="#b8b8b8" stroke-width="0.6"/>
<rect x="284.70" y="121.60" width="25.70" height="13.80" fill="#ffffff" stroke="#b8b8b8" stroke-width="0.6"/>
<rect x="285.10" y="133.60" width="24.90" height="2.20" fill="#ffffff" />
<text x="263.70" y="131.60" font-size="7.3" fill="#1a1a1a" font-weight="normal" textLength="14.20" lengthAdjust="spacingAndGlyphs" stroke="#1a1a1a" stroke-width="0.12" >Effect</text>
<text x="288.30" y="130.60" font-size="7.3" fill="#1a1a1a" font-weight="normal" textLength="16.60" lengthAdjust="spacingAndGlyphs" stroke="#1a1a1a" stroke-width="0.12" >Timing</text>
<text x="312.70" y="131.60" font-size="7.3" fill="#1a1a1a" font-weight="normal" textLength="38.60" lengthAdjust="spacingAndGlyphs" stroke="#1a1a1a" stroke-width="0.12" >Text Animation</text>
<text x="263.70" y="149.70" font-size="7.3" fill="#1a1a1a" font-weight="normal" textLength="13.80" lengthAdjust="spacingAndGlyphs" stroke="#1a1a1a" stroke-width="0.12" >Start:</text>
<line x1="263.70" y1="150.80" x2="266.60" y2="150.80" stroke="#1a1a1a" stroke-width="0.5" />
<rect x="293.40" y="140.30" width="89.00" height="11.50" fill="#ffffff" stroke="#b4b4b4" stroke-width="0.7"/>
<rect x="373.50" y="140.90" width="8.40" height="10.30" fill="#ececec" />
<path d="M376.00,145.25 L377.70,147.65 L379.40,145.25" fill="none" stroke="#303030" stroke-width="1.4" />
<rect x="303.20" y="142.20" width="69.10" height="8.40" fill="#3393f3" />
<circle cx="299.4" cy="146.2" r="3.2" fill="#ffffff" stroke="#283040" stroke-width="1.3"/>
<path d="M299.4,144 v2.4 h1.8" fill="none" stroke="#303848" stroke-width="0.7" />
<text x="306.80" y="149.30" font-size="7.3" fill="#ffffff" font-weight="normal" textLength="35.70" lengthAdjust="spacingAndGlyphs" stroke="#ffffff" stroke-width="0.2" >After Previous</text>
<text x="263.70" y="163.80" font-size="7.3" fill="#1a1a1a" font-weight="normal" textLength="15.90" lengthAdjust="spacingAndGlyphs" stroke="#1a1a1a" stroke-width="0.12" >Delay:</text>
<line x1="263.70" y1="164.90" x2="267.20" y2="164.90" stroke="#1a1a1a" stroke-width="0.5" />
<rect x="293.40" y="155.20" width="36.10" height="11.10" fill="#ffffff" stroke="#b4b4b4" stroke-width="0.7"/>
<rect x="321.80" y="155.80" width="7.20" height="10.20" fill="#e8e8e8" />
<polygon points="324.10,159.40 326.70,159.40 325.40,157.80" fill="#202020"/>
<polygon points="324.10,162.60 326.70,162.60 325.40,164.20" fill="#202020"/>
<text x="296.20" y="163.60" font-size="7.3" fill="#1a1a1a" font-weight="normal" textLength="3.00" lengthAdjust="spacingAndGlyphs" stroke="#1a1a1a" stroke-width="0.12" >0</text>
<text x="334.90" y="163.00" font-size="7.3" fill="#1a1a1a" font-weight="normal" textLength="20.90" lengthAdjust="spacingAndGlyphs" stroke="#1a1a1a" stroke-width="0.12" >seconds</text>
<text x="263.70" y="177.00" font-size="7.3" fill="#1a1a1a" font-weight="normal" textLength="25.00" lengthAdjust="spacingAndGlyphs" stroke="#1a1a1a" stroke-width="0.12" >Duration:</text>
<line x1="284.20" y1="178.20" x2="287.40" y2="178.20" stroke="#1a1a1a" stroke-width="0.5" />
<rect x="293.40" y="168.80" width="89.00" height="11.80" fill="#ffffff" stroke="#b4b4b4" stroke-width="0.7"/>
<rect x="373.50" y="169.40" width="8.40" height="10.60" fill="#ececec" />
<path d="M376.00,173.90 L377.70,176.30 L379.40,173.90" fill="none" stroke="#303030" stroke-width="1.4" />
<text x="296.20" y="177.00" font-size="7.3" fill="#1a1a1a" font-weight="normal" textLength="51.30" lengthAdjust="spacingAndGlyphs" stroke="#1a1a1a" stroke-width="0.12" >2 seconds (Medium)</text>
<text x="263.70" y="191.50" font-size="7.3" fill="#1a1a1a" font-weight="normal" textLength="19.80" lengthAdjust="spacingAndGlyphs" stroke="#1a1a1a" stroke-width="0.12" >Repeat:</text>
<line x1="263.70" y1="192.60" x2="267.20" y2="192.60" stroke="#1a1a1a" stroke-width="0.5" />
<rect x="293.40" y="183.00" width="89.00" height="12.00" fill="#ffffff" stroke="#b4b4b4" stroke-width="0.7"/>
<rect x="373.50" y="183.60" width="8.40" height="10.80" fill="#ececec" />
<path d="M376.00,188.20 L377.70,190.60 L379.40,188.20" fill="none" stroke="#303030" stroke-width="1.4" />
<text x="296.20" y="191.30" font-size="7.3" fill="#1a1a1a" font-weight="normal" textLength="16.80" lengthAdjust="spacingAndGlyphs" stroke="#1a1a1a" stroke-width="0.12" >(none)</text>
<rect x="264.50" y="198.70" width="6.00" height="6.80" fill="#ffffff" stroke="#555" stroke-width="0.7"/>
<text x="272.00" y="204.50" font-size="7.3" fill="#1a1a1a" font-weight="normal" textLength="72.70" lengthAdjust="spacingAndGlyphs" stroke="#1a1a1a" stroke-width="0.12" >Rewind when done playing</text>
<line x1="278.20" y1="205.60" x2="282.00" y2="205.60" stroke="#1a1a1a" stroke-width="0.5" />
<rect x="264.50" y="209.40" width="32.00" height="12.60" fill="#e6e6e6" stroke="#a8a8a8" stroke-width="0.7"/>
<text x="266.60" y="217.80" font-size="7.3" fill="#1a1a1a" font-weight="normal" textLength="21.00" lengthAdjust="spacingAndGlyphs" stroke="#1a1a1a" stroke-width="0.12" >Triggers</text>
<line x1="266.60" y1="219.00" x2="269.00" y2="219.00" stroke="#1a1a1a" stroke-width="0.5" />
<polygon points="290.50,213.20 293.90,213.20 292.20,215.20" fill="#202020"/>
<polygon points="290.50,216.40 293.90,216.40 292.20,218.40" fill="#202020"/>
<rect x="360.00" y="274.30" width="36.80" height="12.40" fill="#e8eef6" stroke="#4a90d8" stroke-width="0.9"/>
<text x="373.80" y="283.00" font-size="7.3" fill="#1a1a1a" font-weight="normal" textLength="7.80" lengthAdjust="spacingAndGlyphs" stroke="#1a1a1a" stroke-width="0.12" >OK</text>
<rect x="402.70" y="274.30" width="37.30" height="12.40" fill="#e6e6e6" stroke="#a8a8a8" stroke-width="0.7"/>
<text x="411.40" y="283.00" font-size="7.3" fill="#1a1a1a" font-weight="normal" textLength="20.00" lengthAdjust="spacingAndGlyphs" stroke="#1a1a1a" stroke-width="0.12" >Cancel</text>
<g transform="translate(155.20,274.60) rotate(-54.70)">
<polygon points="0.00,-1.80 167.93,-2.50 166.53,-5.30 183.43,0.00 166.53,5.30 167.93,2.50 0.00,1.80" fill="url(#arrA)" stroke="#8e1218" stroke-width="0.4" stroke-linejoin="round"/>
</g>
<g transform="translate(452.40,367.80) rotate(-126.84)">
<polygon points="0.00,-1.30 93.28,-2.10 91.88,-5.10 108.08,0.00 91.88,5.10 93.28,2.10 0.00,1.30" fill="url(#arrB)" stroke="#8e1218" stroke-width="0.4" stroke-linejoin="round"/>
</g>
<rect x="579.40" y="78.60" width="7.40" height="315.40" fill="#464646" />
<rect x="579.40" y="78.60" width="7.40" height="7.80" fill="#5a5a5a" />
<polygon points="581.60,83.30 584.60,83.30 583.10,81.50" fill="#d8d8d8"/>
<rect x="579.40" y="358.60" width="7.40" height="7.80" fill="#5a5a5a" />
<polygon points="581.60,361.70 584.60,361.70 583.10,363.50" fill="#d8d8d8"/>
<rect x="579.40" y="366.40" width="7.40" height="27.60" fill="#262626" />
<polygon points="581.60,372.40 584.60,372.40 583.10,370.80" fill="#c8c8c8"/>
<polygon points="581.60,374.40 584.60,374.40 583.10,372.80" fill="#c8c8c8"/>
<polygon points="581.60,380.80 584.60,380.80 583.10,382.40" fill="#c8c8c8"/>
<polygon points="581.60,382.80 584.60,382.80 583.10,384.40" fill="#c8c8c8"/>
<rect x="588.40" y="77.30" width="111.60" height="321.70" fill="#292929" />
<line x1="587.60" y1="77.30" x2="587.60" y2="399.00" stroke="#3e3e3e" stroke-width="0.8" />
<text x="595.00" y="97.00" font-size="12.9" fill="#e4e4e4" font-weight="normal" textLength="64.00" lengthAdjust="spacingAndGlyphs" stroke="#e4e4e4" stroke-width="0" >Animation P...</text>
<polygon points="664.90,89.10 669.90,89.10 667.40,92.10" fill="#f4f4f4"/>
<path d="M685.6,88.2 l4.2,4.6 M689.8,88.2 l-4.2,4.6" fill="none" stroke="#ffffff" stroke-width="1.2" />
<rect x="594.30" y="104.50" width="44.60" height="13.50" fill="#4a4a4a" stroke="#5c5c5c" stroke-width="0.6"/>
<polygon points="598.90,108.40 598.90,114.60 602.10,111.50" fill="#d0d0d0"/>
<text x="607.60" y="114.20" font-size="7.6" fill="#f0f0f0" font-weight="normal" textLength="27.40" lengthAdjust="spacingAndGlyphs" stroke="#f0f0f0" stroke-width="0.2" >Play From</text>
<rect x="671.40" y="104.50" width="11.80" height="13.50" fill="#4a4a4a" stroke="#5c5c5c" stroke-width="0.6"/>
<polygon points="675.70,112.20 678.90,112.20 677.30,110.20" fill="#808080"/>
<rect x="685.20" y="104.50" width="10.20" height="13.50" fill="#2c2c2c" stroke="#4c4c4c" stroke-width="0.6"/>
<polygon points="688.00,110.00 692.60,110.00 690.30,112.80" fill="#f4f4f4"/>
<text x="599.00" y="131.80" font-size="7.4" fill="#f0f0f0" font-weight="normal" textLength="2.40" lengthAdjust="spacingAndGlyphs" stroke="#f0f0f0" stroke-width="0.2" >1</text>
<polygon points="606.60,125.90 607.43,128.31 609.70,128.46 607.94,130.09 608.51,132.59 606.60,131.20 604.69,132.59 605.26,130.09 603.50,128.46 605.77,128.31" fill="#4fd27a" stroke="#9af0b4" stroke-width="0.5" stroke-linejoin="miter" />
<text x="614.60" y="131.80" font-size="7.4" fill="#f0f0f0" font-weight="normal" textLength="31.00" lengthAdjust="spacingAndGlyphs" stroke="#f0f0f0" stroke-width="0.2" >Rectangle 3</text>
<rect x="658.20" y="125.80" width="10.00" height="8.10" fill="#92dc7c" />
<line x1="668.60" y1="124.60" x2="668.60" y2="136.00" stroke="#e0e0e0" stroke-width="0.6" />
<rect x="593.80" y="136.40" width="102.70" height="13.00" fill="#cc4620" />
<polygon points="606.60,139.30 607.43,141.71 609.70,141.86 607.94,143.49 608.51,145.99 606.60,144.60 604.69,145.99 605.26,143.49 603.50,141.86 605.77,141.71" fill="#8fe6a0" stroke="#c8f8d4" stroke-width="0.5" stroke-linejoin="miter" />
<text x="614.60" y="145.40" font-size="7.4" fill="#ffffff" font-weight="normal" textLength="31.00" lengthAdjust="spacingAndGlyphs" stroke="#ffffff" stroke-width="0.2" >Rectangle 4</text>
<rect x="669.00" y="139.60" width="16.70" height="7.30" fill="#92dc7c" />
<polygon points="688.60,142.40 691.20,142.40 689.90,144.00" fill="#7a2a14"/>
<text x="607.00" y="390.60" font-size="7.2" fill="#e8e8e8" font-weight="normal" textLength="21.80" lengthAdjust="spacingAndGlyphs" stroke="#e8e8e8" stroke-width="0.2" >Seconds</text>
<polygon points="631.20,387.40 634.40,387.40 632.80,389.40" fill="#e8e8e8"/>
<polygon points="651.00,385.50 651.00,390.50 648.20,388.00" fill="#f0f0f0"/>
<rect x="654.10" y="383.60" width="32.50" height="8.40" fill="#8c8c8c" />
<rect x="654.40" y="383.90" width="7.20" height="7.80" fill="#7a7a7a" stroke="#a8a8a8" stroke-width="0.5"/>
<text x="656.60" y="390.40" font-size="7" fill="#2a2a2a" font-weight="normal" textLength="2.80" lengthAdjust="spacingAndGlyphs" stroke="#2a2a2a" stroke-width="0.2" >0</text>
<text x="677.60" y="390.40" font-size="7" fill="#2a2a2a" font-weight="normal" textLength="3.00" lengthAdjust="spacingAndGlyphs" stroke="#2a2a2a" stroke-width="0.2" >2</text>
<line x1="669.40" y1="386.40" x2="669.40" y2="389.60" stroke="#3a3a3a" stroke-width="0.7" />
<polygon points="690.20,385.50 690.20,390.50 693.00,388.00" fill="#f0f0f0"/>
<rect x="0.00" y="399.20" width="700.00" height="15.80" fill="#2e2e2e" />
<line x1="0.00" y1="399.00" x2="700.00" y2="399.00" stroke="#222222" stroke-width="0.8" />
<text x="4.00" y="411.70" font-size="7.4" fill="#e8e8e8" font-weight="normal" textLength="29.40" lengthAdjust="spacingAndGlyphs" stroke="#e8e8e8" stroke-width="0.2" >Slide 1 of 1</text>
<path d="M43.3,405.2 h6.2 v7 h-6.2 z M46.4,405.2 v7" fill="none" stroke="#cccccc" stroke-width="0.7" />
<path d="M482.6,407.6 h7.6 M482.6,410 h7.6 M482.6,412.4 h7.6 M484.8,405.4 l1.6,-1.6 l1.6,1.6" fill="none" stroke="#d4d4d4" stroke-width="0.8" />
<text x="492.00" y="411.60" font-size="7.4" fill="#f0f0f0" font-weight="normal" textLength="15.00" lengthAdjust="spacingAndGlyphs" stroke="#f0f0f0" stroke-width="0.2" >Notes</text>
<rect x="517.00" y="402.40" width="20.00" height="12.60" fill="#555555" />
<path d="M523.4,405.2 h7.4 v7 h-7.4 z M525.4,407.4 h3.4 v2.6 h-3.4 z" fill="none" stroke="#f0f0f0" stroke-width="0.8" />
<path d="M543.4,405.2 h2.8 v2.8 h-2.8 z M548,405.2 h2.8 v2.8 h-2.8 z M543.4,409.8 h2.8 v2.8 h-2.8 z M548,409.8 h2.8 v2.8 h-2.8 z" fill="none" stroke="#cccccc" stroke-width="0.7" />
<path d="M564.2,405.2 h6.8 v6.4 h-6.8 z M567.6,405.2 v6.4 M565.4,413 h4.4" fill="none" stroke="#cccccc" stroke-width="0.7" />
<path d="M585.2,404.6 h6.6 v4.4 h-6.6 z M588.5,409 v3 M586.4,412.6 h4.2" fill="none" stroke="#cccccc" stroke-width="0.8" />
<line x1="602.40" y1="408.40" x2="605.60" y2="408.40" stroke="#e0e0e0" stroke-width="0.8" />
<line x1="608.00" y1="408.40" x2="660.60" y2="408.40" stroke="#b0b0b0" stroke-width="0.8" />
<rect x="624.30" y="405.40" width="2.90" height="7.40" fill="#f0f0f0" />
<path d="M662.4,408.4 h3.4 M664.1,406.7 v3.4" fill="none" stroke="#cccccc" stroke-width="0.8" />
<text x="674.00" y="411.20" font-size="7" fill="#d8d8d8" font-weight="normal" textLength="10.00" lengthAdjust="spacingAndGlyphs" stroke="#d8d8d8" stroke-width="0.2" >68%</text>
<path d="M692.2,406.4 h4.6 v4.6 h-4.6 z M694.5,404.6 v8.2 M690.4,408.7 h8.2" fill="none" stroke="#cccccc" stroke-width="0.6" />
<text x="628.30" y="409.10" font-size="11.2" fill="#808080" font-weight="normal" textLength="61.00" lengthAdjust="spacingAndGlyphs" stroke="#808080" stroke-width="0" >wsxdn.com</text>
<text x="627.70" y="408.40" font-size="11.2" fill="#121212" font-weight="normal" textLength="61.00" lengthAdjust="spacingAndGlyphs" stroke="#121212" stroke-width="0.25" >wsxdn.com</text>
</g>
</svg>
</body></html>
